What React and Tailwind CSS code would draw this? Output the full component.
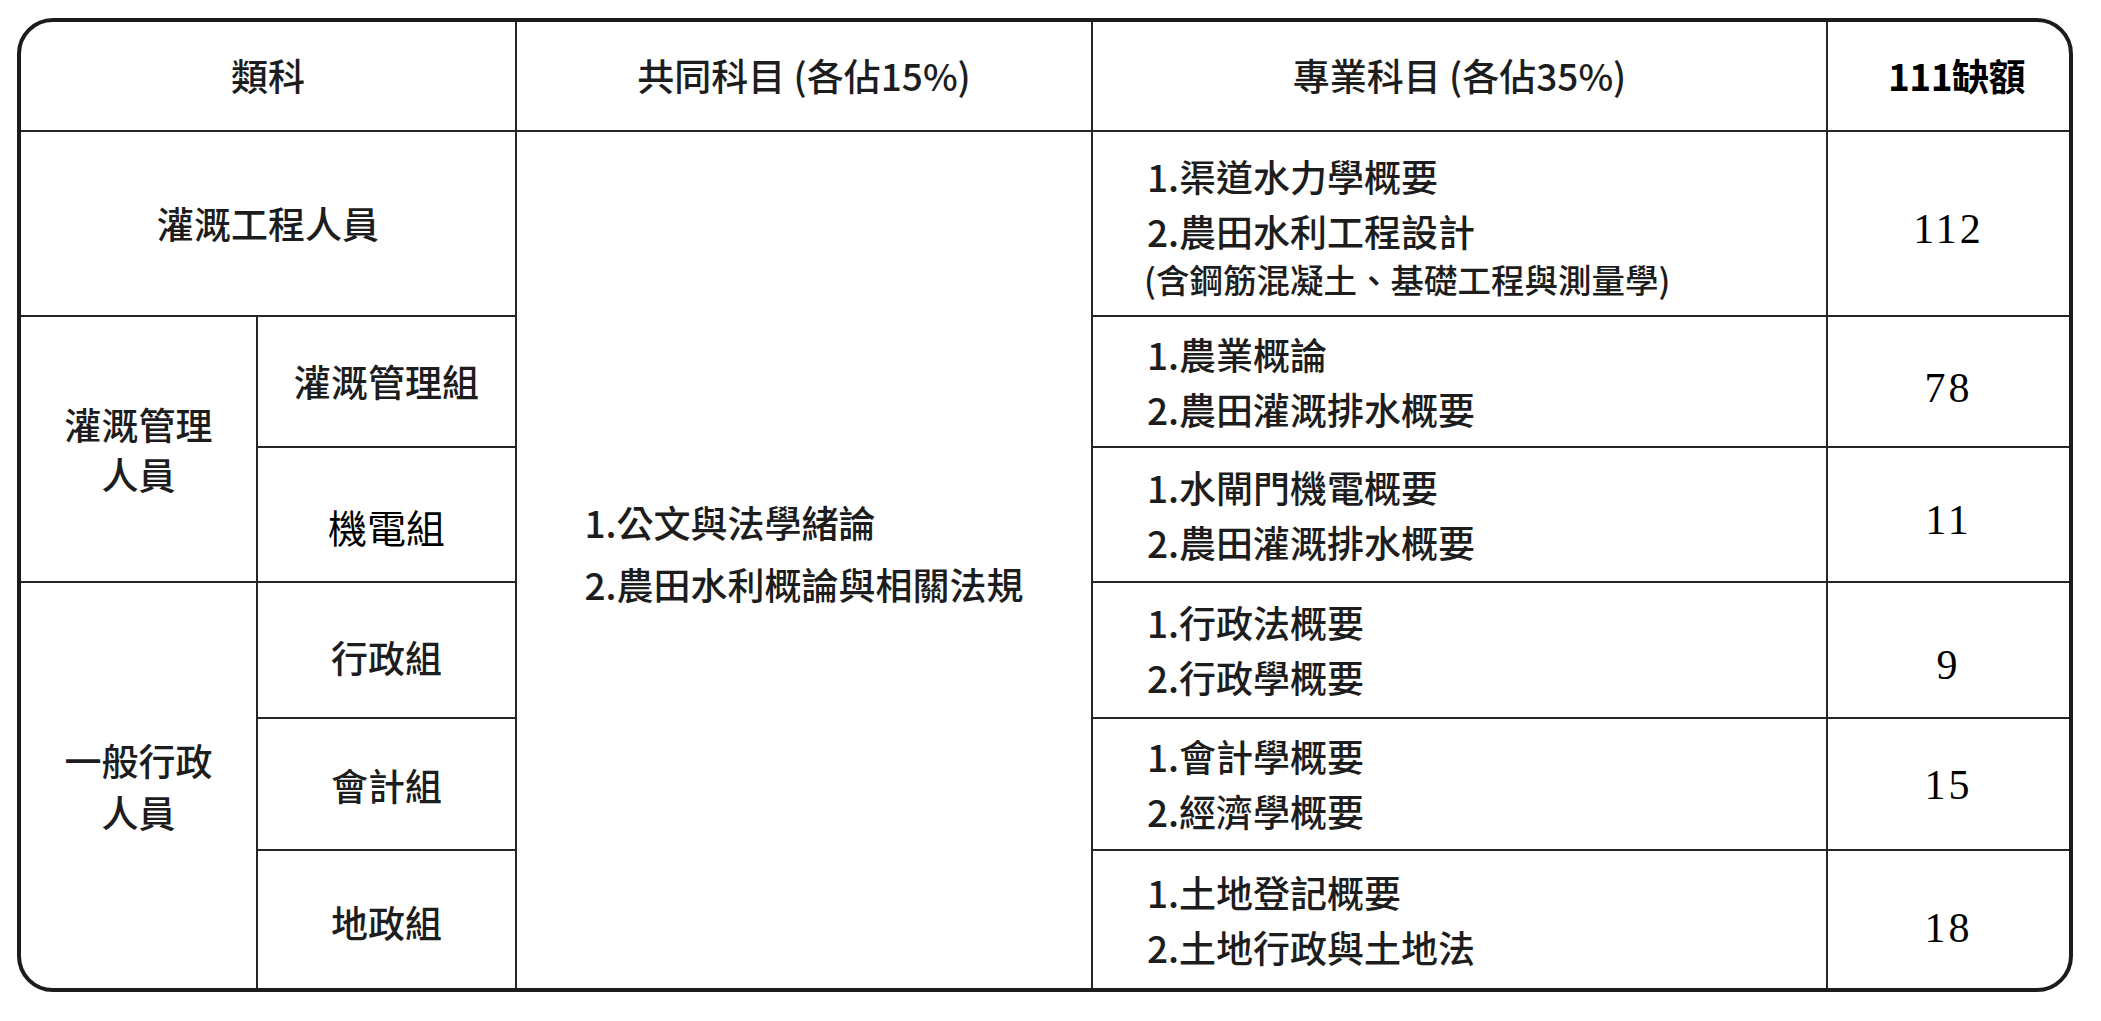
import React from 'react';

const cjk = "font-['Noto_Sans_CJK_TC','Noto_Sans_CJK_JP',sans-serif]";
const serif = "font-['Liberation_Serif','DejaVu_Serif',serif]";

const line = 'border-[#262626]';

function Cell({ className = '', children }) {
  return <div className={`flex items-center justify-center ${line} ${className}`}>{children}</div>;
}

function Subjects({ items, note, last }) {
  return (
    <Cell className={`border-r-2 ${last ? '' : 'border-b-2'} justify-start pl-[54px]`}>
      <div className="text-left">
        {items.map((s) => (
          <div key={s} className="leading-[55px]">
            {s}
          </div>
        ))}
        {note && <div className="text-[33.5px] leading-[39px] -ml-[3px]">{note}</div>}
      </div>
    </Cell>
  );
}

function Quota({ value, last, className = '' }) {
  return (
    <Cell className={`${last ? '' : 'border-b-2'} ${className}`}>
      <span className={`${serif} text-[42px] tracking-[3px] font-normal text-black leading-none`}>{value}</span>
    </Cell>
  );
}

export default function App() {
  return (
    <div lang="zh-TW" className={`min-h-screen bg-white pl-[17px] pt-[18px] ${cjk} text-[37px] font-medium text-[#1d1d1d]`}>
      <div className="w-[2056px] overflow-hidden rounded-[36px] border-4 border-[#1c1c1c]">
        <div className="grid grid-cols-[237px_259px_576px_735px_241px] grid-rows-[110px_185px_131px_135px_136px_132px_137px]">
          {/* header */}
          <Cell className="col-span-2 border-r-2 border-b-2">類科</Cell>
          <Cell className="border-r-2 border-b-2">共同科目 (各佔15%)</Cell>
          <Cell className="border-r-2 border-b-2">專業科目 (各佔35%)</Cell>
          <Cell className="border-b-2 font-bold pl-[16px] text-black tracking-[-0.5px]">111缺額</Cell>

          {/* 灌溉工程 */}
          <Cell className="col-span-2 border-r-2 border-b-2">灌溉工程人員</Cell>
          <Cell className="row-span-6 border-r-2 pb-[14px]">
            <div className="text-left leading-[62px]">
              <div>1.公文與法學緒論</div>
              <div>2.農田水利概論與相關法規</div>
            </div>
          </Cell>
          <Subjects items={['1.渠道水力學概要', '2.農田水利工程設計']} note="(含鋼筋混凝土、基礎工程與測量學)" />
          <Quota value="112" className="pt-[10px]" />

          {/* 灌溉管理 */}
          <Cell className="row-span-2 border-r-2 border-b-2 text-center leading-[50px]">
            <div>
              灌溉管理
              <br />
              人員
            </div>
          </Cell>
          <Cell className="border-r-2 border-b-2">灌溉管理組</Cell>
          <Subjects items={['1.農業概論', '2.農田灌溉排水概要']} />
          <Quota value="78" className="pt-[12px]" />

          <Cell className="border-r-2 border-b-2 pt-[24px] text-[39px] font-normal text-black">機電組</Cell>
          <Subjects items={['1.水閘門機電概要', '2.農田灌溉排水概要']} />
          <Quota value="11" className="pt-[10px]" />

          {/* 一般行政 */}
          <Cell className="row-span-3 border-r-2 text-center leading-[52px]">
            <div>
              一般行政
              <br />
              人員
            </div>
          </Cell>
          <Cell className="border-r-2 border-b-2 pt-[16px]">行政組</Cell>
          <Subjects items={['1.行政法概要', '2.行政學概要']} />
          <Quota value="9" className="pt-[30px]" />

          <Cell className="border-r-2 border-b-2 pt-[4px]">會計組</Cell>
          <Subjects items={['1.會計學概要', '2.經濟學概要']} />
          <Quota value="15" className="pt-[2px]" />

          <Cell className="border-r-2 pt-[6px]">地政組</Cell>
          <Subjects items={['1.土地登記概要', '2.土地行政與土地法']} last />
          <Quota value="18" last className="pt-[16px]" />
        </div>
      </div>
    </div>
  );
}
